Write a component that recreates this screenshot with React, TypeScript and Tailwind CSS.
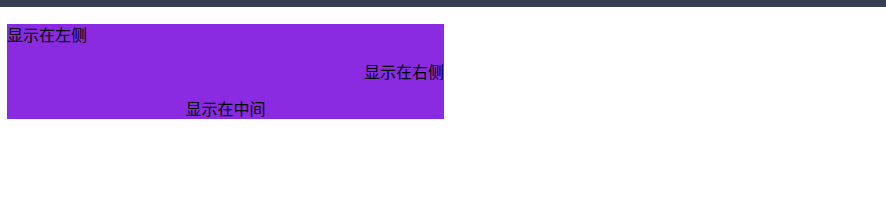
import React from "react";

export default function App() {
  return (
    <div className="min-h-screen bg-white text-black" style={{ fontFamily: '"Liberation Sans", "Noto Sans CJK SC", sans-serif' }}>
      <div className="h-[7px] bg-[#353f4f]" />
      <div className="ml-[7px] mt-[17px] flex h-[95px] w-[437px] flex-col gap-[14px] bg-[#8a2be2] text-base leading-[23px]">
        <div className="text-left">显示在左侧</div>
        <div className="text-right">显示在右侧</div>
        <div className="text-center">显示在中间</div>
      </div>
    </div>
  );
}
